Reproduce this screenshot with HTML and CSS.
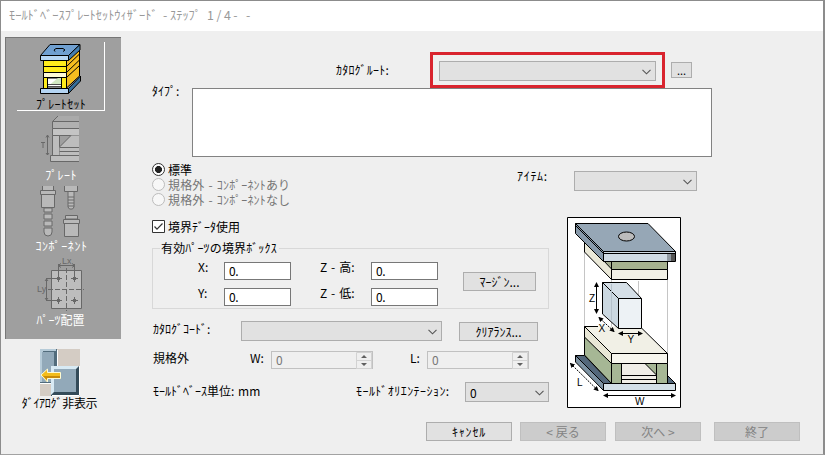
FILE: index.html
```html
<!DOCTYPE html>
<html lang="ja">
<head>
<meta charset="utf-8">
<title>ﾓｰﾙﾄﾞﾍﾞｰｽﾌﾟﾚｰﾄｾｯﾄｳｨｻﾞｰﾄﾞ</title>
<link rel="stylesheet" href="styles.css">
</head>
<body>
<div class="window">
  <header class="titlebar"><span class="t-name">ﾓｰﾙﾄﾞﾍﾞｰｽﾌﾟﾚｰﾄｾｯﾄｳｨｻﾞｰﾄﾞ</span><span class="t-dash">-</span><span class="t-step">ｽﾃｯﾌﾟ</span><span class="t-count">1 / 4 -</span><span>-</span></header>
  <div class="content">
    <aside class="side">
      <nav class="steps">
        <div class="step step-active">
          <svg width="44" height="52" viewBox="40 43 44 52" stroke="#000" stroke-width="1">
            <path d="M67.500 60L80.500 48V76L67.500 88Z" fill="#f5bd20"/>
            <path d="M44.500 60.500H67.500V88.500H44.500Z" fill="#ffec1c"/>
            <path d="M44.500 72.500H67.500V77.500H44.500Z" fill="#fffbd7"/>
            <path d="M44.500 66.500H67.500L80.500 54M67.500 72.500L80.500 60M67.500 77.500L80.500 65.500" fill="none"/>
            <path d="M48.500 78H62.500V88H48.500Z" fill="#fff"/><path d="M49 86L59 78H62V84H49" fill="#d2e8c3" stroke="none"/><path d="M49 84.500H62M49 86.500H62" fill="none" stroke-width=".7"/>
            <path d="M69.500 88.500L81.500 76V81L69.500 93.500Z" fill="#356e9b"/>
            <path d="M41.500 88.500H69.500V93.500H41.500Z" fill="#b5d5f3"/>
            <path d="M41.500 55.500L51 44.500H81L69.500 55.500Z" fill="#6f9fd0"/>
            <path d="M69.500 55.500L81 44.500V50L69.500 60.500Z" fill="#477fae"/>
            <path d="M41.500 55.500H69.500V60.500H41.500Z" fill="#b5d5f3"/>
            <path d="M56 51.500L55 50L57 48.500H64L66 50L64 51.500" fill="none"/>
          </svg>
          <span>ﾌﾟﾚｰﾄｾｯﾄ</span>
        </div>
        <div class="step step-plate">
          <svg width="42" height="50" viewBox="38 114 42 50" stroke="#686868" fill="#bdbdbd">
            <path d="M51.500 121.500L57 116H78V122" fill="#aaa" stroke="none"/><path d="M51.500 121.500L57 116"/>
            <path d="M78 121.500H51.500V128.500H78" fill="#b0b0b0"/><path d="M78 128.500H51.500V135.500H78" fill="#c4c4c4"/>
            <path d="M51.500 135.500H58.500V155.500H51.500Z"/><path d="M58.500 147L70 135.500H78V155H58.500Z" stroke="none"/><path d="M58.500 147L70 135.500M58.500 147.500H78M58.500 151.500H78" fill="none"/>
            <path d="M78 155.500H49.500V161.500H78"/>
            <path d="M40 142.500H44M42 142.500V148M46.500 135V155M45 137.500L46.500 135L48 137.500M45 153L46.500 155L48 153" fill="none"/>
          </svg>
          <span>ﾌﾟﾚｰﾄ</span>
        </div>
        <div class="step step-parts">
          <svg width="42" height="53" viewBox="38 184 42 53" stroke="#686868" fill="#b9b9b9">
            <path d="M41.500 186V191M52.500 186V191" /><path d="M42 186H52V191H42Z" stroke="none"/>
            <path d="M39.500 190.500H54.500V194.500H39.500ZM40.500 194.500H53.500V207.500H40.500ZM43 208H51V212H43ZM43 214H51V219H43ZM43 221H51V226H43ZM43 228H51V232Q51 236 47 236Q43 236 43 232Z"/>
            <path d="M63.500 186V191.500H76.500V186"/><path d="M67 191.500H73V207L71.500 209H68.500L67 207ZM67 197H73M67 200H73M67 203H73M67 206H73"/>
            <path d="M64.500 215.500H76.500V219H64.500ZM62.500 219.500H78.500V223.500H62.500ZM63.500 223.500H77.500V236.500H63.500Z"/>
          </svg>
          <span>ｺﾝﾎﾟｰﾈﾝﾄ</span>
        </div>
        <div class="step step-place">
          <svg width="48" height="54" viewBox="35 257 48 54" stroke="#686868" fill="none">
            <path d="M50.500 270.500H80.500V308.500H50.500Z" fill="#bdbdbd"/>
            <path d="M65.500 268V311M47 289.500H83" stroke-dasharray="5 2"/>
            <path d="M57.500 264V282M73.500 264V282M57.500 297V304M73.500 297V304M45 278.500H61M70 278.500H77M45 300.500H61M70 300.500H77M57 265.500H74M45.500 279V300M60 263.500L57 265.500L60 267.500M71 263.500L74 265.500L71 267.500M44 281L45.500 279L47 281M44 298L45.500 300L47 298"/>
            <path d="M56 278.500H59M72 278.500H75M56 300.500H59M72 300.500H75" stroke-width="3"/>
            <g class="tiny"><text x="61" y="263.500">Lx</text><text x="36" y="292">Ly</text></g>
          </svg>
          <span>ﾊﾟｰﾂ配置</span>
        </div>
      </nav>
      <div class="hide-dialog">
        <svg width="40" height="47" viewBox="40 349 40 47">
          <path d="M40 349H80V396H40Z" fill="#d4ccc4"/>
          <path d="M40 349H57V384H40Z" fill="#526c7c"/><path d="M40 349H56V351H43V382H40Z" fill="#b6cbd8"/><path d="M42 352H54V382H42Z" fill="#92a9b9"/><path d="M57.500 350V383.500H40" fill="none" stroke="#fff"/>
          <path d="M51 366H80V396H51Z" fill="#344b59"/><path d="M51 366H79L76 369H54V392L51 395Z" fill="#d8eaf4"/><path d="M54 369H76V392H54Z" fill="#92a9b9"/><path d="M79.500 366V395.500H52" fill="none" stroke="#fff"/>
          <path d="M41 375L47.500 369V372.500H60.500V378.500H47.500V382Z" fill="#f3bd1b" stroke="#fffbd2"/><path d="M43 376H60V378H47V380Z" fill="#c88b09"/>
        </svg>
        <span>ﾀﾞｲｱﾛｸﾞ非表示</span>
      </div>
    </aside>
    <main class="main">
      <section class="root-row">
        <label>ｶﾀﾛｸﾞﾙｰﾄ:</label>
        <div class="highlight"><div class="combo root-combo"><svg class="chev" viewBox="0 0 9 6"><path d="M.5 .8L4.500 4.800L8.500 .8"/></svg></div></div>
        <button class="btn dots">...</button>
      </section>
      <section class="type-row"><label>ﾀｲﾌﾟ:</label><div class="typebox"></div></section>
      <section class="kind-row">
        <div class="radios">
          <div class="radio"><i class="on"></i>標準</div>
          <div class="radio off"><i></i>規格外 - ｺﾝﾎﾟｰﾈﾝﾄあり</div>
          <div class="radio off"><i></i>規格外 - ｺﾝﾎﾟｰﾈﾝﾄなし</div>
        </div>
        <label class="item-label">ｱｲﾃﾑ:</label>
        <div class="combo item-combo"><svg class="chev" viewBox="0 0 9 6"><path d="M.5 .8L4.500 4.800L8.500 .8"/></svg></div>
      </section>
      <div class="lower">
        <div class="form">
          <div class="check"><svg width="13" height="13" viewBox="0 0 13 13"><path d="M.5 .5H12.500V12.500H.5Z" fill="#fff" stroke="#333"/><path d="M2.500 6.500L5 9.200L10.500 3.500" fill="none" stroke="#333" stroke-width="1.200"/></svg>境界ﾃﾞｰﾀ使用</div>
          <fieldset class="bounds">
            <legend>有効ﾊﾟｰﾂの境界ﾎﾞｯｸｽ</legend>
            <div class="coords">
              <label>X:</label><div class="field">0.</div><label class="zl">Z - 高:</label><div class="field">0.</div>
              <label>Y:</label><div class="field">0.</div><label class="zl">Z - 低:</label><div class="field">0.</div>
            </div>
            <button class="btn margin-btn">ﾏｰｼﾞﾝ...</button>
          </fieldset>
          <div class="code-row"><label>ｶﾀﾛｸﾞｺｰﾄﾞ:</label><div class="combo code-combo"><svg class="chev" viewBox="0 0 9 6"><path d="M.5 .8L4.500 4.800L8.500 .8"/></svg></div><button class="btn clear-btn">ｸﾘｱﾗﾝｽ...</button></div>
          <div class="size-row">
            <label class="nonstd">規格外</label><label class="wl">W:</label>
            <div class="spin"><span>0</span><svg width="16" height="17" viewBox="0 0 16 17"><path d="M.5 .5H15.500V16.500H.5ZM0 8.500H16" fill="#efefef" stroke="#d2d2d2"/><path d="M5 6L8 3L11 6ZM5 11L8 14L11 11Z" fill="#606060"/></svg></div>
            <label class="ll">L:</label>
            <div class="spin"><span>0</span><svg width="16" height="17" viewBox="0 0 16 17"><path d="M.5 .5H15.500V16.500H.5ZM0 8.500H16" fill="#efefef" stroke="#d2d2d2"/><path d="M5 6L8 3L11 6ZM5 11L8 14L11 11Z" fill="#606060"/></svg></div>
          </div>
          <div class="unit-row"><label class="unit">ﾓｰﾙﾄﾞﾍﾞｰｽ単位: mm</label><label class="orient">ﾓｰﾙﾄﾞｵﾘｴﾝﾃｰｼｮﾝ:</label><div class="combo orient-combo"><span>0</span><svg class="chev" viewBox="0 0 9 6"><path d="M.5 .8L4.500 4.800L8.500 .8"/></svg></div></div>
        </div>
        <svg class="diagram" width="114" height="191" viewBox="0 0 114 191" stroke="#000">
          <defs><marker id="arr" markerWidth="5" markerHeight="5" refX="4" refY="2.500" orient="auto-start-reverse" markerUnits="userSpaceOnUse"><path d="M0 0L5 2.500L0 5Z" fill="#000" stroke="none"/></marker></defs>
          <path d="M.5 .5H113.500V190.500H.5Z" fill="#fff"/>
          <path d="M17.500 35V109M44.500 62V137M71.500 64V82M100.500 63V136" stroke="#c5c5c5"/>
          <path d="M17.500 25V35L44.500 62.500V44Z" fill="#ebe9d8"/>
          <path d="M36 43L44.500 52V44Z" fill="#a6ae90"/>
          <path d="M44.500 44.500H100.500V52.500H44.500Z" fill="#a6b18f"/><path d="M44.500 52.500H100.500V62.500H44.500Z" fill="#f1f0e6"/>
          <path d="M8.500 6.500H81L108.500 34.500H36.500Z" fill="#96a7b6"/>
          <path d="M8.500 6.500V16.500L36.500 44.500V34.500Z" fill="#8799aa"/>
          <path d="M36.500 34.500H108.500V44.500H36.500Z" fill="#d0dbe4"/><path d="M100 37H104V44H100Z" fill="#929ba3" stroke="none"/><path d="M104 37H108V44H104Z" fill="#555" stroke="none"/><path d="M8.500 8.500L36.500 36.500H108.500" fill="none"/>
          <ellipse cx="59.500" cy="19.500" rx="8" ry="4.500" fill="#bcbcbc"/>
          <path d="M17.500 109.500H73L100.500 136.500H44.500Z" fill="#f1f0e6" stroke="none"/><path d="M31 109.500H17.500L44.500 136.500H100.500L75 111.500" fill="none"/>
          <path d="M35.500 65.500V97L51.500 111.500V81.500Z" fill="#cbd8e1"/><path d="M35.500 65.500H59.500L74.500 81.500H51.500Z" fill="#d5dfe7"/><path d="M51.500 81.500H74.500V111.500H51.500Z" fill="#edf2f5"/><path d="M44.500 67V103" stroke="#b5c1cb"/>
          <path d="M8.500 138.500H17.500L44.500 166.500H36.500Z" fill="#53677a"/><path d="M8.500 138.500V145L36.500 173.500V166.500Z" fill="#7d92a2"/>
          <path d="M17.500 119V138L44.500 166.500V146Z" fill="#a6b795"/><path d="M17.500 109.500V120L44.500 146.500V136.500Z" fill="#e8e6d5"/>
          <path d="M54.500 146.500H89.500V166.500H54.500Z" fill="#f0eee7"/><path d="M78 146.500H89.500V158Z" fill="#a6b795"/><path d="M54.500 158.500H89.500M54.500 162.500H89.500"/>
          <path d="M100.500 158.500L108.500 166.500H100.500Z" fill="#53677a"/>
          <path d="M44.500 146.500H54.500V166.500H44.500ZM89.500 146.500H100.500V166.500H89.500Z" fill="#a6b795"/>
          <path d="M44.500 136.500H100.500V146.500H44.500Z" fill="#f7f6ee"/><path d="M36.500 166.500H108.500V173.500H36.500Z" fill="#d3dfe7"/>
          <g fill="none" marker-start="url(#arr)" marker-end="url(#arr)"><path d="M29.500 66V96"/><path d="M32 100.500L47 114.500" stroke-dasharray="2 1"/><path d="M52 116.500H75"/><path d="M3.500 146.500L31 173.500" stroke-dasharray="2 1"/><path d="M37 178.500H108"/></g>
          <path d="M31 107H38V115H31Z" fill="#f7f6ef" stroke="none"/>
          <g class="axis"><text x="22" y="85">Z</text><text x="31.500" y="114.500">X</text><text x="60.500" y="126">Y</text><text x="10" y="169">L</text><text x="68" y="188">W</text></g>
        </svg>
      </div>
      <footer class="actions"><button class="btn">ｷｬﾝｾﾙ</button><button class="btn dim">&lt; 戻る</button><button class="btn dim next">次へ &gt;</button><button class="btn dim last">終了</button></footer>
    </main>
  </div>
</div>
</body>
</html>
```
FILE: styles.css
```css
* { box-sizing: border-box; }
body { margin: 0; font: 12px/14px "Noto Sans CJK JP", sans-serif; color: #000; }
.window { width: 825px; height: 455px; background: #efefef; border: 1px solid #8c8c8c; border-right-width: 2px; border-bottom-color: #a2a2a2; display: flex; flex-direction: column; overflow: hidden; white-space: nowrap; }
svg { display: block; flex: none; }
label { flex: none; }
.titlebar { height: 30px; background: #fff; color: #999; font-size: 12.4px; display: flex; align-items: center; padding: 0 0 2px 8px; flex: none; }
.t-name { width: 154px; }
.t-dash { width: 7px; }
.t-step { width: 37px; }
.t-count { width: 39px; letter-spacing: -.1px; }
.content { display: flex; flex: 1; min-height: 0; }
.side { width: 120px; padding: 6px 0 0 4px; flex: none; }
.steps { height: 302px; background: #9f9f9f; border-top: 1px solid #777; border-left: 1px solid #777; color: #fff; }
.step { display: flex; flex-direction: column; align-items: center; }
.step-active { color: #000; width: 88px; height: 69px; margin: 4px 0 0 11px; border-right: 1px solid #fff; border-bottom: 1px solid #fff; padding: 1px 0 0 1px; gap: 2px; }
.step-plate { height: 70px; padding: 3px 7px 0 0; gap: 4px; }
.step-plate span { margin-left: 2px; letter-spacing: .4px; }
.step-parts { height: 72px; padding: 3px 8px 0 0; gap: 2px; }
.step-parts span { margin-left: 4px; letter-spacing: .6px; }
.step-active span { letter-spacing: .3px; }
.step-place { padding: 4px 8px 0 0; gap: 2px; }
.step-place span { margin-left: 2px; }
.tiny text { font: 9px "Liberation Sans", sans-serif; fill: #686868; stroke: none; }
.hide-dialog { display: flex; flex-direction: column; align-items: center; padding: 10px 7px 0 0; letter-spacing: -.3px; }
.main { flex: 1; padding-left: 31px; display: flex; flex-direction: column; }
.root-row { display: flex; padding: 21px 0 0 184px; height: 57px; }
.root-row label { width: 94px; padding-top: 11px; letter-spacing: .2px; }
.highlight { width: 235px; height: 36px; border: 3px solid #d9242e; padding: 6px; flex: none; }
.combo { height: 20px; border: 1px solid #adadad; background: #e1e1e1; display: flex; align-items: center; justify-content: flex-end; padding: 1px 4px 0; flex: none; }
.chev { width: 9px; height: 6px; fill: none; stroke: #555; stroke-width: 1.1; }
.root-combo { width: 217px; }
.btn { font: inherit; color: #000; background: #e1e1e1; border: 1px solid #adadad; padding: 0; margin: 0; height: 19px; flex: none; line-height: 15px; }
.dots { width: 21px; height: 16px; margin: 10px 0 0 6px; line-height: 11px; font-size: 11px; }
.type-row { display: flex; height: 69px; }
.type-row label { width: 40px; margin-top: -4px; }
.typebox { width: 520px; background: #fff; border: 1px solid #828282; }
.kind-row { display: flex; height: 60px; padding-top: 5px; }
.radios { width: 365px; }
.radio { height: 15px; display: flex; align-items: center; gap: 3px; line-height: 15px; }
.radio i { width: 13px; height: 13px; border: 1px solid #bcbcbc; border-radius: 50%; background: #f7f7f7; }
.radio i.on { border-color: #333; background: radial-gradient(circle, #222 3.2px, #fff 3.8px); }
.off { color: #757575; word-spacing: 1.2px; letter-spacing: .15px; }
.item-label { width: 57px; padding-top: 7px; letter-spacing: .7px; }
.item-combo { width: 123px; margin-top: 9px; }
.lower { display: flex; }
.form { width: 415px; height: 191px; }
.check { display: flex; gap: 3px; align-items: center; height: 19px; }
.bounds { width: 397px; height: 68px; margin: 5px 0 0; padding: 7px 0 0 45px; border: 1px solid #d8d8d8; display: flex; }
legend { margin-left: -38px; padding: 0 2px 0 1px; letter-spacing: .15px; }
.coords { display: grid; grid-template-columns: 26px 67px 80px 67px; grid-auto-rows: 18px; row-gap: 8px; }
.coords label { margin-top: -2px; }
.coords .zl { padding-left: 29px; word-spacing: 1.2px; }
.field { height: 18px; background: #fff; border: 1px solid #777; padding: 1px 4px; letter-spacing: -.4px; }
.margin-btn { width: 73px; margin: 10px 0 0 25px; }
.code-row { display: flex; height: 20px; margin-top: 12px; padding-left: 1px; }
.code-row label { width: 88px; padding-top: 1px; }
.code-combo { width: 201px; }
.clear-btn { width: 79px; margin: 1px 0 0 17px; }
.size-row { display: flex; margin-top: 10px; height: 18px; padding-left: 1px; }
.nonstd { width: 97px; }
.wl { width: 21px; }
.spin { width: 102px; height: 18px; border: 1px solid #c1c1c1; display: flex; justify-content: space-between; padding-left: 4px; color: #777; line-height: 16px; flex: none; }
.ll { margin-left: 37px; width: 17px; }
.unit-row { display: flex; margin-top: 13px; padding-left: 1px; }
.unit-row label { padding-top: 2px; }
.unit { width: 203px; word-spacing: 1px; }
.orient { width: 109px; letter-spacing: .45px; }
.orient-combo { width: 84px; justify-content: space-between; }
.axis text { font: 10px "Liberation Sans", sans-serif; stroke: none; fill: #000; }
.actions { display: flex; gap: 8px; padding: 14px 0 0 274px; }
.actions .btn { width: 86px; }
.actions .btn:first-child { letter-spacing: .8px; }
.actions .dim { background: #cccccc; border-color: #bfbfbf; color: #838383; }
.next { margin-left: 1px; }
.actions .last { margin-left: 5px; }
```
